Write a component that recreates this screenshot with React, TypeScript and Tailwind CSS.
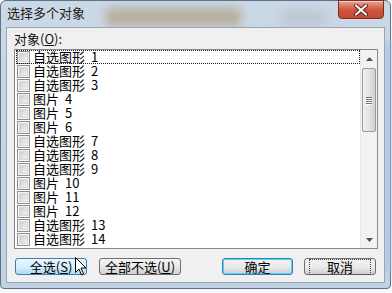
import React from "react";

const items: [string, string][] = [
  ["自选图形", "1"],
  ["自选图形", "2"],
  ["自选图形", "3"],
  ["图片", "4"],
  ["图片", "5"],
  ["图片", "6"],
  ["自选图形", "7"],
  ["自选图形", "8"],
  ["自选图形", "9"],
  ["图片", "10"],
  ["图片", "11"],
  ["图片", "12"],
  ["自选图形", "13"],
  ["自选图形", "14"],
];

const font = { fontFamily: "'Noto Sans CJK SC', 'Liberation Sans', sans-serif" };

function Checkbox() {
  return (
    <div className="w-[13px] h-[13px] border border-[#8e8f8f] bg-[#f4f4f4] p-[1px] shrink-0">
      <div className="w-full h-full bg-gradient-to-br from-[#cfcfcf] to-[#f2f2f2] border border-[#d8d8d8]" />
    </div>
  );
}

export default function App() {
  return (
    <div className="w-[392px] h-[293px] bg-[#f6f7f8] relative overflow-hidden" style={font}>
      {/* window frame */}
      <div className="w-[391px] h-[289px] rounded-t-[6px] rounded-b-[4px] border border-[#5d728c] bg-gradient-to-b from-[#cbd8e5] via-[#c7d5e3] to-[#c2d2e3] flex flex-col px-[5px] pb-[5px] relative">
        {/* blurred background spots */}
        <div className="absolute left-[105px] top-[7px] w-[135px] h-[18px] bg-[#b3a58e] blur-[5px] opacity-80" />
        <div className="absolute left-[280px] top-[10px] w-[45px] h-[14px] bg-[#b5bcc4] blur-[6px] opacity-70" />
        <div className="absolute right-[-2px] top-[40px] w-[8px] h-[230px] bg-[#a9c4e4] blur-[3px] opacity-80" />
        {/* title bar */}
        <div className="h-[26px] flex items-start pt-[5px] pl-[1px] relative">
          <span className="text-[13px] leading-[14px] text-[#1c1c1c]">选择多个对象</span>
          <div className="absolute right-[1px] top-[-1px] w-[46px] h-[19px] rounded-b-[4px] border border-[#7b2c22] bg-gradient-to-b from-[#e8a596] via-[#cf5742] to-[#c9472f] flex items-center justify-center shadow-[inset_0_1px_0_rgba(255,255,255,0.5)]">
            <svg width="14" height="12" viewBox="0 0 14 12">
              <path d="M2 1.5 L12 10.5 M12 1.5 L2 10.5" stroke="#5a1a12" strokeWidth="4" strokeLinecap="round" />
              <path d="M2 1.5 L12 10.5 M12 1.5 L2 10.5" stroke="#ffffff" strokeWidth="2.2" strokeLinecap="round" />
            </svg>
          </div>
        </div>
        {/* client area */}
        <div className="flex-1 bg-[#f0f0f0] border border-[#95a6ba] flex flex-col pl-[7px] pr-[7px] relative">
          <div className="h-[21px] pt-[4px] text-[13px] leading-[14px] text-[#111]">
            对象(<span className="underline">O</span>):
          </div>
          {/* list box */}
          <div className="w-[364px] h-[200px] border border-[#828790] bg-white flex">
            <div className="flex-1 flex flex-col pl-[1px] overflow-hidden">
              {items.map(([name, num], i) => (
                <div
                  key={i}
                  className={`h-[14px] flex items-center gap-[3px] pl-[1px] shrink-0 ${
                    i === 0 ? "outline outline-1 outline-dotted outline-[#222] -outline-offset-1" : ""
                  }`}
                >
                  <Checkbox />
                  <span className="text-[13px] leading-[14px] text-black whitespace-nowrap">
                    {name}
                    <span className="ml-[6px]">{num}</span>
                  </span>
                </div>
              ))}
            </div>
            {/* scrollbar */}
            <div className="w-[17px] h-full bg-[#f2f2f2] border-l border-[#e8e8e8] flex flex-col items-center">
              <div className="h-[17px] w-full flex items-center justify-center">
                <svg width="7" height="4" viewBox="0 0 7 4">
                  <path d="M0 4 L3.5 0 L7 4 Z" fill="#505050" />
                </svg>
              </div>
              <div className="mt-[1px] w-[14px] h-[64px] rounded-[2px] border border-[#9a9a9a] bg-gradient-to-r from-[#f1f1f1] via-[#e3e3e3] to-[#d0d0d0] flex flex-col items-center justify-center gap-[1px]">
                {[0, 1, 2, 3].map((k) => (
                  <div key={k} className="w-[6px] h-[1px] bg-[#707070] shadow-[0_1px_0_#ffffff]" />
                ))}
              </div>
              <div className="flex-1" />
              <div className="h-[17px] w-full flex items-center justify-center">
                <svg width="7" height="4" viewBox="0 0 7 4">
                  <path d="M0 0 L3.5 4 L7 0 Z" fill="#505050" />
                </svg>
              </div>
            </div>
          </div>
          {/* buttons */}
          <div className="flex items-center mt-[9px] pl-[1px]">
            <button className="w-[72px] h-[17px] rounded-[3px] border border-[#3c7fb1] bg-gradient-to-b from-[#eaf6fd] via-[#d9f0fc] to-[#a9dbf6] text-[13px] leading-[14px] text-black flex items-center justify-center">
              全选(<span className="underline">S</span>)
            </button>
            <button className="ml-[12px] w-[82px] h-[17px] rounded-[3px] border border-[#707070] bg-gradient-to-b from-[#f2f2f2] via-[#ebebeb] to-[#cfcfcf] text-[13px] leading-[14px] text-black flex items-center justify-center">
              全部不选(<span className="underline">U</span>)
            </button>
            <button className="ml-[41px] w-[71px] h-[17px] rounded-[3px] border border-[#3c7fb1] bg-gradient-to-b from-[#f2f2f2] via-[#ebebeb] to-[#cfcfcf] shadow-[inset_0_0_0_1px_#48d8fb] text-[13px] leading-[14px] text-black flex items-center justify-center">
              确定
            </button>
            <button className="ml-[11px] w-[72px] h-[17px] rounded-[3px] border border-[#707070] bg-gradient-to-b from-[#f2f2f2] via-[#ebebeb] to-[#cfcfcf] text-[13px] leading-[14px] text-black flex items-center justify-center">
              <span className="px-[17px] outline outline-1 outline-dotted outline-[#444]">取消</span>
            </button>
          </div>
          {/* mouse cursor */}
          <svg className="absolute left-[68px] top-[229px]" width="12" height="19" viewBox="0 0 12 19">
            <path d="M0.5 0.5 L0.5 15.5 L4 12 L6.5 18 L8.5 17 L6 11 L11 11 Z" fill="#ffffff" stroke="#000000" strokeWidth="1" strokeLinejoin="round" />
          </svg>
        </div>
      </div>
    </div>
  );
}
